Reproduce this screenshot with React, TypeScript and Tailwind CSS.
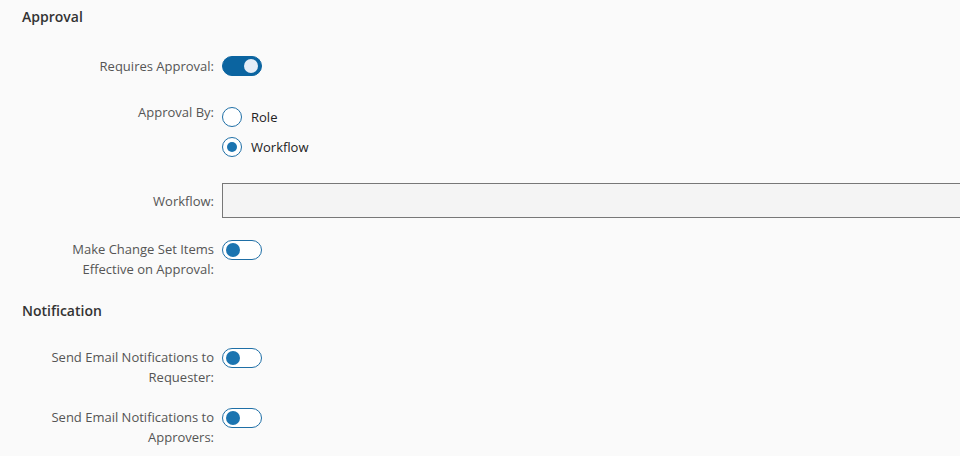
import React, { useState } from 'react';

function Toggle({ on, onClick }: { on: boolean; onClick: () => void }) {
  return (
    <button
      type="button"
      onClick={onClick}
      className={`relative w-10 h-5 shrink-0 rounded-full border ${on ? 'bg-[#0b64a0] border-[#0b64a0]' : 'bg-white border-[#1f6fa6]'}`}
    >
      <span
        className={`absolute top-[2px] w-[14px] h-[14px] rounded-full ${on ? 'left-[21px] bg-[#e6eef7]' : 'left-[3px] bg-[#1b74b0]'}`}
      />
    </button>
  );
}

function Radio({ checked, label, onClick }: { checked: boolean; label: string; onClick: () => void }) {
  return (
    <button type="button" onClick={onClick} className="flex items-center h-[30px] gap-[9px]">
      <span className="w-5 h-5 rounded-full border-[1.5px] border-[#1f6fa6] bg-white flex items-center justify-center">
        {checked && <span className="w-[10px] h-[10px] rounded-full bg-[#1b74b0]" />}
      </span>
      <span className="text-[13px] text-[#222] leading-5">{label}</span>
    </button>
  );
}

export default function App() {
  const [requires, setRequires] = useState(true);
  const [by, setBy] = useState<'role' | 'workflow'>('workflow');
  const [effective, setEffective] = useState(false);
  const [notifyReq, setNotifyReq] = useState(false);
  const [notifyApp, setNotifyApp] = useState(false);

  const label = 'w-[214px] shrink-0 text-right text-[13px] leading-5 text-[#555]';

  return (
    <div
      className="w-[960px] h-[456px] overflow-hidden bg-[#fafafa]"
      style={{ fontFamily: '"Open Sans", "Noto Sans", sans-serif' }}
    >
      <h2 className="pl-[22px] pt-[7px] text-[14px] leading-5 font-semibold text-[#333]">Approval</h2>

      <div className="flex items-center gap-2 mt-[29px]">
        <div className={label}>Requires Approval:</div>
        <Toggle on={requires} onClick={() => setRequires(!requires)} />
      </div>

      <div className="flex items-start gap-2 mt-[26px]">
        <div className={label}>Approval By:</div>
        <div className="flex flex-col">
          <Radio checked={by === 'role'} label="Role" onClick={() => setBy('role')} />
          <Radio checked={by === 'workflow'} label="Workflow" onClick={() => setBy('workflow')} />
        </div>
      </div>

      <div className="flex items-center gap-2 mt-[21px]">
        <div className={label}>Workflow:</div>
        <input
          type="text"
          className="flex-1 -mr-[2px] h-[35px] bg-[#f4f4f4] border border-[#777] outline-none px-2 text-[13px]"
        />
      </div>

      <div className="flex items-start gap-2 mt-[21px]">
        <div className={label}>
          Make Change Set Items
          <br />
          Effective on Approval:
        </div>
        <div className="mt-px">
          <Toggle on={effective} onClick={() => setEffective(!effective)} />
        </div>
      </div>

      <h2 className="pl-[22px] mt-[22px] text-[14px] leading-5 font-semibold text-[#333]">Notification</h2>

      <div className="flex items-start gap-2 mt-[26px]">
        <div className={label}>
          Send Email Notifications to
          <br />
          Requester:
        </div>
        <div className="mt-px">
          <Toggle on={notifyReq} onClick={() => setNotifyReq(!notifyReq)} />
        </div>
      </div>

      <div className="flex items-start gap-2 mt-5">
        <div className={label}>
          Send Email Notifications to
          <br />
          Approvers:
        </div>
        <div className="mt-px">
          <Toggle on={notifyApp} onClick={() => setNotifyApp(!notifyApp)} />
        </div>
      </div>
    </div>
  );
}
